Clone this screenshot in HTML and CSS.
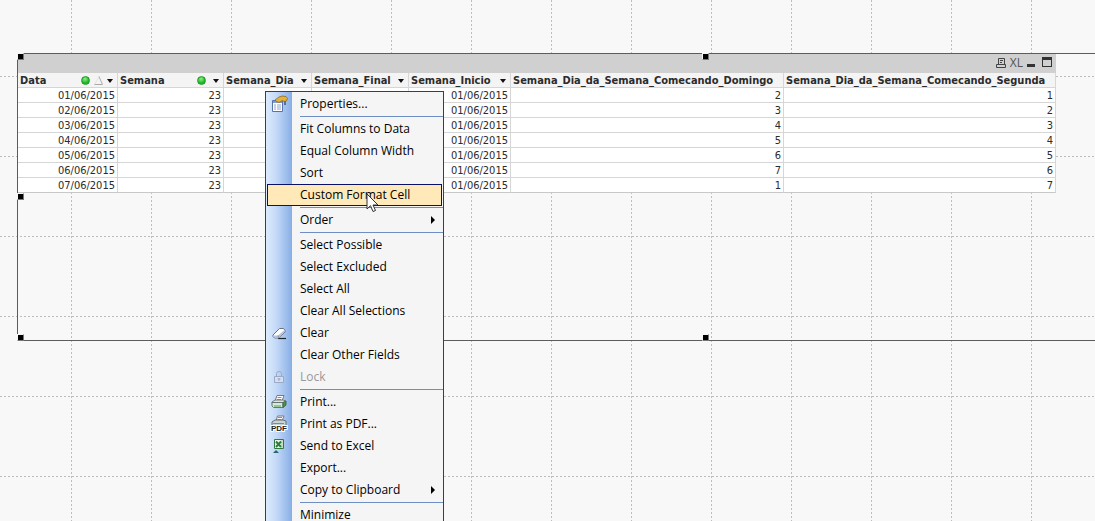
FILE: index.html
```html
<!DOCTYPE html>
<html lang="en">
<head>
<meta charset="utf-8">
<title>Semana</title>
<link rel="stylesheet" href="styles.css">
</head>
<body>
<main class="sheet">
  <section class="object">
    <header class="caption">
      <button class="cap-btn" aria-label="Print"><svg width="12" height="12" viewBox="0 0 12 12" fill="none" stroke="#444"><path d="M3.500 7V1.500h6V7M5 3.500h3M5 5.500h2M1.500 7.500h9v3h-9z"/></svg></button>
      <button class="cap-btn cap-xl">XL</button>
      <button class="cap-btn" aria-label="Minimize"><svg width="12" height="12" viewBox="0 0 12 12"><path d="M1 7h8v3H1z" fill="#333"/></svg></button>
      <button class="cap-btn" aria-label="Maximize"><svg width="12" height="12" viewBox="0 0 12 12"><path d="M1 0h10v10H1zM2 3v6h8V3z" fill="#333" fill-rule="evenodd"/></svg></button>
    </header>
    <table class="grid">
      <colgroup><col class="c-data"><col class="c-semana"><col class="c-dia"><col class="c-final"><col class="c-inicio"><col class="c-domingo"><col class="c-segunda"></colgroup>
      <thead>
        <tr>
          <th><div class="head"><span class="name">Data</span><span class="dot"></span><svg class="sort" width="9" height="9" viewBox="0 0 9 9"><path d="M.5 8.500 5 .5" stroke="#e4e4e4"/><path d="M5 .5 8.500 8.500H.5" fill="none" stroke="#aaa"/></svg><span class="arrow"></span></div></th>
          <th><div class="head"><span class="name">Semana</span><span class="dot"></span><span class="arrow far"></span></div></th>
          <th><div class="head"><span class="name">Semana_Dia</span><span class="arrow"></span></div></th>
          <th><div class="head"><span class="name">Semana_Final</span><span class="arrow"></span></div></th>
          <th><div class="head"><span class="name">Semana_Inicio</span><span class="arrow"></span></div></th>
          <th><div class="head"><span class="name">Semana_Dia_da_Semana_Comecando_Domingo</span></div></th>
          <th><div class="head"><span class="name">Semana_Dia_da_Semana_Comecando_Segunda</span></div></th>
        </tr>
      </thead>
      <tbody>
        <tr><td>01/06/2015</td><td>23</td><td></td><td></td><td>01/06/2015</td><td>2</td><td>1</td></tr>
        <tr><td>02/06/2015</td><td>23</td><td></td><td></td><td>01/06/2015</td><td>3</td><td>2</td></tr>
        <tr><td>03/06/2015</td><td>23</td><td></td><td></td><td>01/06/2015</td><td>4</td><td>3</td></tr>
        <tr><td>04/06/2015</td><td>23</td><td></td><td></td><td>01/06/2015</td><td>5</td><td>4</td></tr>
        <tr><td>05/06/2015</td><td>23</td><td></td><td></td><td>01/06/2015</td><td>6</td><td>5</td></tr>
        <tr><td>06/06/2015</td><td>23</td><td></td><td></td><td>01/06/2015</td><td>7</td><td>6</td></tr>
        <tr><td>07/06/2015</td><td>23</td><td></td><td></td><td>01/06/2015</td><td>1</td><td>7</td></tr>
      </tbody>
    </table>
    <i class="handle top left"></i><i class="handle top center"></i><i class="handle middle left"></i><i class="handle bottom left"></i><i class="handle bottom center"></i>
  </section>
</main>

<div class="menu" role="menu">
  <button class="item" role="menuitem"><span class="icon"><svg width="18" height="18" viewBox="0 0 18 18"><path d="M2.500 5.500h10v11h-10z" fill="#fff" stroke="#5873a8"/><path d="M3 6h9v2H3z" fill="#7f9bd0"/><path d="M4 10h2m1 0h4M4 12h2m1 0h4M4 14h2m1 0h4" stroke="#8ea4cc"/><path d="M5 5 9 2l3-1 4 .5 1.500 2-1 2.500-2.500.5-1.500-1L9 7.500 6.500 6.500z" fill="#e4b23c" stroke="#8a6a22" stroke-width=".8"/><path d="m14 6 2 0v4h-2z" fill="#5b6f9c"/></svg></span><span class="label">Properties...</span></button>
  <hr class="sep">
  <button class="item" role="menuitem"><span class="icon"></span><span class="label">Fit Columns to Data</span></button>
  <button class="item" role="menuitem"><span class="icon"></span><span class="label">Equal Column Width</span></button>
  <button class="item" role="menuitem"><span class="icon"></span><span class="label">Sort</span></button>
  <button class="item active" role="menuitem"><span class="icon"></span><span class="label">Custom Format Cell</span></button>
  <hr class="sep">
  <button class="item" role="menuitem" aria-haspopup="menu"><span class="icon"></span><span class="label">Order</span><span class="sub"></span></button>
  <hr class="sep">
  <button class="item" role="menuitem"><span class="icon"></span><span class="label">Select Possible</span></button>
  <button class="item" role="menuitem"><span class="icon"></span><span class="label">Select Excluded</span></button>
  <button class="item" role="menuitem"><span class="icon"></span><span class="label">Select All</span></button>
  <button class="item" role="menuitem"><span class="icon"></span><span class="label">Clear All Selections</span></button>
  <button class="item" role="menuitem"><span class="icon"><svg width="16" height="16" viewBox="0 0 16 16"><path d="M7 13.500h8" stroke="#222" stroke-width="1.200"/><path d="M2 10 8.500 3.500h4l1.500 2v1.500L7.500 13H3.500L2 11.500z" fill="#fff" stroke="#66728c"/><path d="M2.500 10.500h4.500l6.500-5.500v2L7.500 12.500h-4z" fill="#b5c3df"/><path d="m7 10.500.5 2" stroke="#66728c" stroke-width=".7"/></svg></span><span class="label">Clear</span></button>
  <button class="item" role="menuitem"><span class="icon"></span><span class="label">Clear Other Fields</span></button>
  <button class="item" role="menuitem" disabled><span class="icon"><svg width="16" height="16" viewBox="0 0 16 16" fill="none" stroke="#9aa9c6"><path d="M5.500 7V4.500q0-2 2.500-2t2.500 2V7"/><path d="M3.500 7.500h9v6h-9z" fill="#d5dff0"/><path d="M8 9v3M6.500 10h3"/></svg></span><span class="label">Lock</span></button>
  <hr class="sep">
  <button class="item" role="menuitem"><span class="icon"><svg width="18" height="18" viewBox="0 0 18 18"><path d="m5 8 2-5.500h7L12 8z" fill="#fff" stroke="#778"/><path d="M7.500 4.500h4M7 6.500h4" stroke="#889"/><path d="m2 9 3-2h8l3 1-2 2.500H2z" fill="#dce2e2" stroke="#707a80"/><path d="M2 9.500h11v5H3.500L2 13z" fill="#dbe6df" stroke="#66786e"/><path d="m13 9.500 3-1.500v4l-3 2.500z" fill="#409b45" stroke="#44664b"/><path d="M4 13h7" stroke="#48a848"/></svg></span><span class="label">Print...</span></button>
  <button class="item" role="menuitem"><span class="icon"><svg width="18" height="18" viewBox="0 0 18 18"><path d="m6 6 1.500-5h6.500L12 6z" fill="#fff" stroke="#778"/><path d="M8 2.500h4M7.500 4.500h4" stroke="#889"/><path d="m2 7 3-2h8l3 1v5H2z" fill="#c8d3d3" stroke="#647078"/><path d="M3 8.500h11" stroke="#659f70"/><text class="pdf" x="9" y="16">PDF</text></svg></span><span class="label">Print as PDF...</span></button>
  <button class="item" role="menuitem"><span class="icon"><svg width="16" height="16" viewBox="0 0 16 16"><path d="M3.500 1.500h9v9h-9z" fill="#eaf6e6" stroke="#317942"/><path d="M11 2v8" stroke="#9dc79e"/><path d="m5 3.500 5 5.500m0-5.500L5 9" stroke="#27803a" stroke-width="2"/><path d="m2 15 3-3 3 3z" fill="#28656b"/></svg></span><span class="label">Send to Excel</span></button>
  <button class="item" role="menuitem"><span class="icon"></span><span class="label">Export...</span></button>
  <button class="item" role="menuitem" aria-haspopup="menu"><span class="icon"></span><span class="label">Copy to Clipboard</span><span class="sub"></span></button>
  <hr class="sep">
  <button class="item" role="menuitem"><span class="icon"></span><span class="label">Minimize</span></button>
</div>

<svg class="cursor" width="13" height="20" viewBox="0 0 13 20"><path d="M1 1v15l3.500-3.300L7 18.500l2.500-1L7 12h5z" fill="#fff" stroke="#333"/></svg>
</body>
</html>
```
FILE: styles.css
```css
* { box-sizing: border-box; }

body {
  margin: 0;
  height: 100vh;
  overflow: hidden;
  position: relative;
  background-color: #f8f8f8;
  color: #2b2b2b;
  font: 11px/13px "DejaVu Sans Condensed", "DejaVu Sans", sans-serif;
}

button {
  margin: 0;
  padding: 0;
  border: 0;
  background: none;
  color: inherit;
  font: inherit;
}

/* dashed layout grid, one cell every 80px */
.sheet {
  height: 100%;
  padding: 53px 0 0 17px;
  overflow: hidden;
  background-image:
    conic-gradient(from 270deg at 1px 2px, #bdbdbd 90deg, transparent 0),
    conic-gradient(from 270deg at 2px 1px, #bdbdbd 90deg, transparent 0);
  background-size: 80px 4px, 4px 80px;
  background-position: 71px 0, 0 76px;
}

.object {
  position: relative;
  min-height: 288px;
  border: 1px solid #5c5c5c;
  border-right: 0;
}

.caption {
  display: flex;
  justify-content: flex-end;
  align-items: center;
  gap: 3px;
  width: 1038px;
  height: 19px;
  padding: 0 3px 2px;
  background: #d0d0d0;
}

.cap-btn { display: flex; height: 12px; }
.cap-xl { font: 12px/12px "Open Sans", sans-serif; color: #555; }

.grid {
  width: 1038px;
  table-layout: fixed;
  border-collapse: separate;
  border-spacing: 0;
  background: #fff;
}

.c-data { width: 100px; }
.c-semana { width: 106px; }
.c-dia { width: 88px; }
.c-final { width: 97px; }
.c-inicio { width: 102px; }
.c-domingo { width: 273px; }
.c-segunda { width: 272px; }

.grid th,
.grid td {
  height: 15px;
  padding: 1px 1px 0;
  border-right: 1px solid #d6d6d6;
  border-bottom: 1px solid #d6d6d6;
  white-space: nowrap;
  overflow: hidden;
}

.grid th { padding-left: 2px; background: #f4f4f4; text-align: left; }
.grid td { padding-right: 2px; text-align: right; }
.grid tr:last-child td { border-bottom-color: #c8c8c8; }

.head { display: flex; align-items: center; gap: 4px; height: 13px; padding-right: 3px; }
.name { flex: 1; }

.dot {
  width: 9px;
  height: 9px;
  border: 1px solid #1d9a24;
  border-radius: 50%;
  background: radial-gradient(circle at 3px 2px, #8df08a, #20b62a 60%);
}

.arrow {
  border: 3px solid transparent;
  border-top: 4px solid #111;
  border-bottom: 0;
}
.far { margin-left: 3px; }

.handle {
  position: absolute;
  width: 7px;
  height: 7px;
  border: 1px solid #777;
  border-top-color: #f4f4f4;
  border-left-color: #f4f4f4;
  background: #000;
}
.top { top: -1px; }
.middle { top: 139px; }
.bottom { bottom: -1px; }
.left { left: -1px; }
.center { left: 684px; }

.menu {
  position: absolute;
  left: 265px;
  top: 91px;
  width: 179px;
  padding: 1px 0;
  border: 1px solid #17428f;
  background: linear-gradient(to right, #dcebfd, #c5daf7 10px, #88aee6 26px, #f5f5f5 26px);
  color: #000;
  font: 12px/20px "Open Sans", sans-serif;
}

.item {
  display: flex;
  align-items: center;
  width: 100%;
  height: 22px;
  padding: 0 8px 0 3px;
  text-align: left;
}
.item:disabled { color: #999; }
.item.active {
  padding: 0 7px 0 1px;
  width: auto;
  margin: 0 1px;
  min-width: 175px;
  border: 1px solid #0a1168;
  background: #ffe9b9;
}

.icon { display: flex; justify-content: center; width: 20px; margin-right: 11px; }
.label { flex: 1; white-space: nowrap; }

.sub {
  border: 4px solid transparent;
  border-left: 4px solid #000;
  border-right: 0;
}

.sep { height: 1px; margin: 1px 0 1px 34px; border: 0; background: #6e8fc4; }

.pdf {
  font: bold 8px "Liberation Sans", sans-serif;
  text-anchor: middle;
  fill: #222;
  stroke: #fff;
  stroke-width: 2px;
  paint-order: stroke;
}

.cursor { position: absolute; left: 366px; top: 193px; }
```
